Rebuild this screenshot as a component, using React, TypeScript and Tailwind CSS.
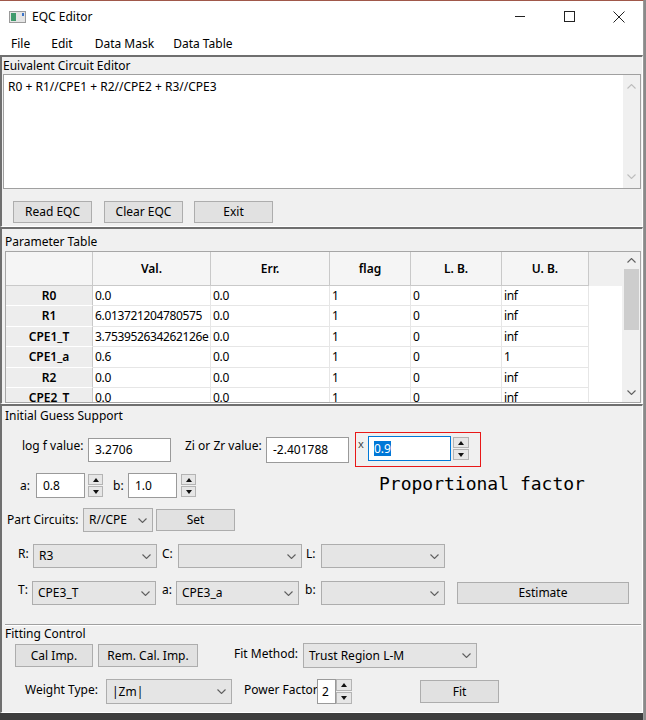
import React from 'react'

// column widths of the parameter table (row header first)
const colW = ['w-[87px]', 'w-[118px]', 'w-[119px]', 'w-[81px]', 'w-[91px]', 'w-[87px]']
const headers = ['', 'Val.', 'Err.', 'flag', 'L. B.', 'U. B.']

// rows alternate 20 / 21 px like the Qt view
const rowH = ['h-[20px]', 'h-[21px]', 'h-[20px]', 'h-[21px]', 'h-[20px]', 'h-[21px]']

const rows = [
  ['R0', '0.0', '0.0', '1', '0', 'inf'],
  ['R1', '6.013721204780575', '0.0', '1', '0', 'inf'],
  ['CPE1_T', '3.753952634262126e', '0.0', '1', '0', 'inf'],
  ['CPE1_a', '0.6', '0.0', '1', '0', '1'],
  ['R2', '0.0', '0.0', '1', '0', 'inf'],
  ['CPE2_T', '0.0', '0.0', '1', '0', 'inf'],
]

const panel =
  'border-t-2 border-l-2 border-t-[#6f6f6f] border-l-[#6f6f6f] border-b border-r border-b-white border-r-white bg-[#f0f0f0]'

function Chevron({ color = '#5f5f5f', up = false }: { color?: string; up?: boolean }) {
  return (
    <svg width="9" height="5" viewBox="0 0 9 5" className="shrink-0">
      <path
        d={up ? 'M0.5 4.5 L4.5 0.5 L8.5 4.5' : 'M0.5 0.5 L4.5 4.5 L8.5 0.5'}
        fill="none"
        stroke={color}
        strokeWidth="1.1"
      />
    </svg>
  )
}

function Tri({ up = false }: { up?: boolean }) {
  return (
    <svg width="6" height="4" viewBox="0 0 6 4">
      <path d={up ? 'M0 4 L3 0 L6 4 Z' : 'M0 0 L3 4 L6 0 Z'} fill="#111" />
    </svg>
  )
}

function Spin({ className = '' }: { className?: string }) {
  return (
    <div className={`flex shrink-0 flex-col gap-[1px] ${className}`}>
      <div className="flex flex-1 items-center justify-center border border-[#b4b4b4] bg-[#e6e6e6]">
        <Tri up />
      </div>
      <div className="flex flex-1 items-center justify-center border border-[#b4b4b4] bg-[#e6e6e6]">
        <Tri />
      </div>
    </div>
  )
}

function Btn({ children, className = '' }: { children: React.ReactNode; className?: string }) {
  return (
    <div
      className={`flex shrink-0 items-center justify-center border border-[#adadad] bg-[#e1e1e1] ${className}`}
    >
      {children}
    </div>
  )
}

function Combo({ value = '', className = '' }: { value?: string; className?: string }) {
  return (
    <div
      className={`flex shrink-0 items-center justify-between border border-[#adadad] bg-[#e5e5e5] pl-[5px] pr-[5px] ${className}`}
    >
      <span className="whitespace-nowrap">{value}</span>
      <Chevron />
    </div>
  )
}

function Input({ value, className = '' }: { value: string; className?: string }) {
  return (
    <div className={`flex shrink-0 items-center border border-[#9a9a9a] bg-white pl-[6px] ${className}`}>
      {value}
    </div>
  )
}

function Lbl({ children, className = '' }: { children: React.ReactNode; className?: string }) {
  return <div className={`shrink-0 whitespace-nowrap leading-[16px] ${className}`}>{children}</div>
}

export default function App() {
  return (
    <div className="flex h-[720px] w-[646px] bg-[#8a8a8a] font-['Noto_Sans','Liberation_Sans',sans-serif] text-[12px] text-black">
      <div className="flex w-[644px] flex-col border-t border-r border-t-[#a0584a] border-r-[#9a9a9a] bg-white">
        {/* title bar */}
        <div className="flex h-[31px] shrink-0 items-center bg-white">
          <svg width="17" height="12" viewBox="0 0 17 12" className="ml-[9px]">
            <rect x="0.5" y="0.5" width="16" height="11" fill="#e4e4e4" stroke="#9a9a9a" />
            <rect x="2" y="2" width="5" height="8" fill="#3f9a6c" />
            <rect x="13" y="2" width="2" height="3" fill="#3c74c9" />
          </svg>
          <span className="ml-[6px]">EQC Editor</span>
          <div className="ml-auto flex items-center">
            <svg width="11" height="11" viewBox="0 0 11 11" className="mr-[38px]">
              <path d="M0 5.5 H10" stroke="#222" strokeWidth="1" />
            </svg>
            <svg width="11" height="11" viewBox="0 0 11 11" className="mr-[38px]">
              <rect x="0.5" y="0.5" width="10" height="10" fill="none" stroke="#222" strokeWidth="1" />
            </svg>
            <svg width="12" height="12" viewBox="0 0 12 12" className="mr-[18px]">
              <path d="M0.5 0.5 L11.5 11.5 M11.5 0.5 L0.5 11.5" stroke="#222" strokeWidth="1" />
            </svg>
          </div>
        </div>

        {/* menu bar */}
        <div className="flex h-[23px] shrink-0 items-center bg-white pt-[1px]">
          <span className="ml-[11px]">File</span>
          <span className="ml-[21px]">Edit</span>
          <span className="ml-[22px]">Data Mask</span>
          <span className="ml-[19px]">Data Table</span>
        </div>

        {/* equivalent circuit editor */}
        <div className={`flex shrink-0 flex-col ${panel}`}>
          <Lbl className="h-[17px] pl-[1px] leading-[17px]">Euivalent Circuit Editor</Lbl>
          <div className="ml-[1px] flex h-[115px] w-[638px] border border-[#a0a0a0] bg-white">
            <div className="flex-1 pl-[4px] pt-[3px]">R0 + R1//CPE1 + R2//CPE2 + R3//CPE3</div>
            <div className="flex w-[17px] flex-col items-center justify-between bg-[#f0f0f0] py-[9px]">
              <Chevron color="#bdbdbd" up />
              <Chevron color="#bdbdbd" />
            </div>
          </div>
          <div className="mt-[12px] mb-[3px] flex h-[22px] items-center">
            <Btn className="ml-[11px] h-[22px] w-[79px]">Read EQC</Btn>
            <Btn className="ml-[12px] h-[22px] w-[79px]">Clear EQC</Btn>
            <Btn className="ml-[11px] h-[22px] w-[79px]">Exit</Btn>
          </div>
        </div>

        {/* parameter table */}
        <div className={`flex shrink-0 flex-col ${panel}`}>
          <Lbl className="h-[22px] pl-[3px] pt-[5px]">Parameter Table</Lbl>
          <div className="ml-[3px] flex h-[152px] w-[636px] border border-[#a6a6a6] bg-white">
            <div className="flex w-[616px] flex-col overflow-hidden">
              <div className="flex h-[34px] shrink-0 bg-[#f0f0f0]">
                {headers.map((h, i) => (
                  <div
                    key={i}
                    className={`flex shrink-0 items-center justify-center border-r border-b border-[#c9c9c9] bg-[#f5f5f5] font-semibold ${colW[i]}`}
                  >
                    {h}
                  </div>
                ))}
              </div>
              {rows.map((r, ri) => (
                <div key={r[0]} className={`flex shrink-0 ${rowH[ri]}`}>
                  {r.map((c, i) =>
                    i === 0 ? (
                      <div
                        key={i}
                        className={`flex shrink-0 items-center justify-center border-r border-b border-r-[#c9c9c9] border-b-white bg-[#ededed] font-semibold ${colW[i]}`}
                      >
                        {c}
                      </div>
                    ) : (
                      <div
                        key={i}
                        className={`flex shrink-0 items-center overflow-hidden whitespace-nowrap border-r border-b border-[#e6e6e6] pl-[2px] tracking-[-0.35px] ${colW[i]}`}
                      >
                        {c}
                      </div>
                    ),
                  )}
                </div>
              ))}
            </div>
            <div className="flex w-[18px] flex-col items-center bg-[#f0f0f0]">
              <div className="flex h-[17px] items-center">
                <Chevron color="#606060" up />
              </div>
              <div className="h-[61px] w-[15px] bg-[#cdcdcd]" />
              <div className="flex flex-1 items-end pb-[7px]">
                <Chevron color="#606060" />
              </div>
            </div>
          </div>
        </div>

        {/* initial guess support + fitting control */}
        <div className={`flex flex-1 flex-col ${panel}`}>
          <Lbl className="h-[20px] pl-[3px] pt-[2px]">Initial Guess Support</Lbl>

          <div className="mt-[6px] flex h-[35px] items-center">
            <Lbl className="mb-[8px] ml-[20px] w-[66px]">log f value:</Lbl>
            <Input value="3.2706" className="h-[24px] w-[83px]" />
            <Lbl className="mb-[8px] ml-[14px] w-[81px]">Zi or Zr value:</Lbl>
            <Input value="-2.401788" className="h-[26px] w-[83px]" />
            <div className="ml-[6px] flex h-[35px] w-[126px] shrink-0 border border-[#e81818] pt-[3px]">
              <span className="ml-[2px] mt-[2px] w-[9px] text-[11px] leading-[12px] text-[#444]">x</span>
              <div className="ml-[1px] flex h-[25px] w-[83px] items-center border border-[#0078d7] bg-white pl-[5px]">
                <span className="bg-[#0078d7] leading-[15px] text-white">0.9</span>
              </div>
              <Spin className="ml-[2px] mt-[1px] h-[23px] w-[16px]" />
            </div>
          </div>

          <div className="mt-[6px] flex h-[25px] items-center">
            <Lbl className="ml-[18px] w-[16px]">a:</Lbl>
            <Input value="0.8" className="h-[25px] w-[49px]" />
            <Spin className="ml-[3px] h-[23px] w-[15px]" />
            <Lbl className="ml-[10px] w-[15px]">b:</Lbl>
            <Input value="1.0" className="h-[25px] w-[49px]" />
            <Spin className="ml-[4px] h-[23px] w-[15px]" />
            <span className="mb-[4px] ml-[183px] whitespace-nowrap font-['DejaVu_Sans_Mono',monospace] text-[18px] leading-[22px]">
              Proportional factor
            </span>
          </div>

          <div className="mt-[10px] flex h-[24px] items-center">
            <Lbl className="ml-[5px] w-[76px]">Part Circuits:</Lbl>
            <Combo value="R//CPE" className="h-[24px] w-[70px]" />
            <Btn className="ml-[3px] h-[22px] w-[79px]">Set</Btn>
          </div>

          <div className="mt-[12px] flex h-[24px] items-start">
            <Lbl className="ml-[16px] mt-[2px] w-[15px]">R:</Lbl>
            <Combo value="R3" className="h-[24px] w-[124px]" />
            <Lbl className="ml-[5px] mt-[2px] w-[16px]">C:</Lbl>
            <Combo className="h-[24px] w-[124px]" />
            <Lbl className="ml-[4px] mt-[2px] w-[15px]">L:</Lbl>
            <Combo className="h-[24px] w-[124px]" />
          </div>

          <div className="mt-[13px] flex h-[24px] items-start">
            <Lbl className="ml-[16px] mt-[1px] w-[14px]">T:</Lbl>
            <Combo value="CPE3_T" className="h-[24px] w-[124px]" />
            <Lbl className="ml-[6px] mt-[1px] w-[14px]">a:</Lbl>
            <Combo value="CPE3_a" className="h-[24px] w-[123px]" />
            <Lbl className="ml-[6px] mt-[1px] w-[16px]">b:</Lbl>
            <Combo className="h-[24px] w-[124px]" />
            <Btn className="ml-[12px] mt-[1px] h-[22px] w-[172px]">Estimate</Btn>
          </div>

          <div className="ml-[3px] mt-[19px] h-[2px] w-[636px] border-t border-b border-t-[#a0a0a0] border-b-white" />
          <Lbl className="ml-[3px] h-[16px]">Fitting Control</Lbl>

          <div className="mt-[1px] flex h-[25px] items-center">
            <Btn className="ml-[13px] h-[23px] w-[78px]">Cal Imp.</Btn>
            <Btn className="ml-[5px] h-[23px] w-[100px]">Rem. Cal. Imp.</Btn>
            <Lbl className="mb-[4px] ml-[36px] w-[69px]">Fit Method:</Lbl>
            <Combo value="Trust Region L-M" className="h-[25px] w-[174px]" />
          </div>

          <div className="mt-[11px] flex h-[25px] items-center">
            <Lbl className="mb-[4px] ml-[23px] w-[81px]">Weight Type:</Lbl>
            <Combo value="|Zm|" className="h-[25px] w-[126px]" />
            <Lbl className="mb-[4px] ml-[12px] w-[73px]">Power Factor</Lbl>
            <div className="flex h-[25px] w-[19px] shrink-0 items-center border border-[#9a9a9a] bg-white pl-[4px]">
              2
            </div>
            <Spin className="h-[25px] w-[16px]" />
            <Btn className="ml-[68px] h-[23px] w-[79px]">Fit</Btn>
          </div>
        </div>
        <div className="h-[7px] shrink-0 bg-[#3e3e3e]" />
      </div>
    </div>
  )
}
